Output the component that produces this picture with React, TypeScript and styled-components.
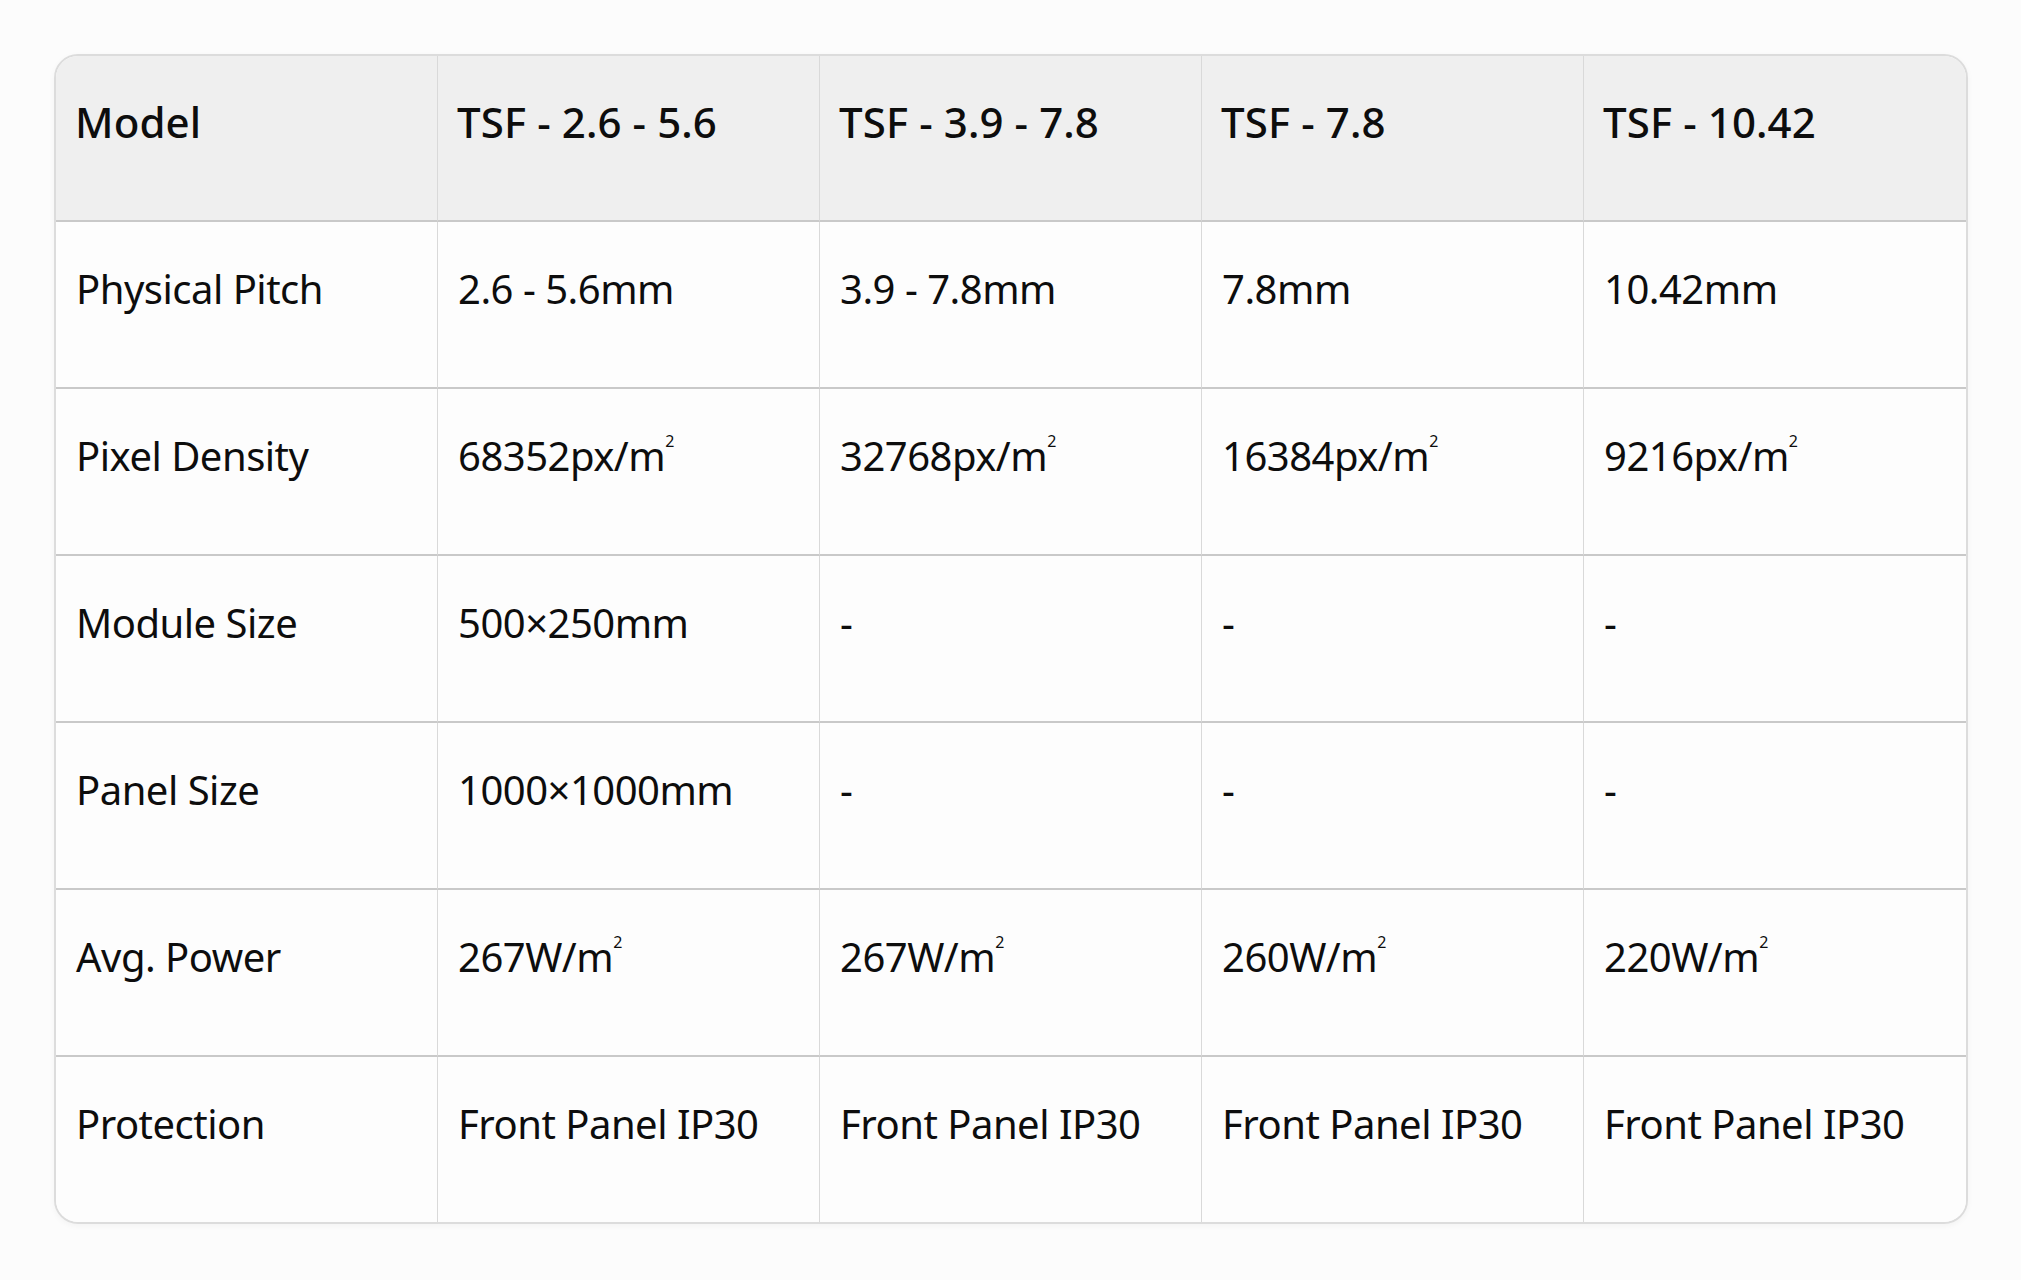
import React from "react";
import styled, { createGlobalStyle } from "styled-components";

const Global = createGlobalStyle`
  html, body { margin: 0; padding: 0; background: #fcfcfc; }
  body { font-family: "Noto Sans", "Open Sans", sans-serif; color: #0d0d0d; }
`;

const Page = styled.div`
  width: 2021px;
  height: 1280px;
  box-sizing: border-box;
  padding: 54px 53px 0 54px;
  background: #fcfcfc;
`;

const Table = styled.div`
  display: grid;
  grid-template-columns: repeat(5, 1fr);
  border: 2px solid #dcdcdc;
  border-radius: 24px;
  overflow: hidden;
  background: #fdfdfd;
  box-shadow: 0 2px 6px rgba(0, 0, 0, 0.04);
`;

const Cell = styled.div<{ $head?: boolean; $last?: boolean; $lastRow?: boolean }>`
  height: ${(p) => (p.$head ? 166 : p.$lastRow ? 165 : 167)}px;
  box-sizing: border-box;
  padding: ${(p) => (p.$head ? 42 : 43)}px 20px 0 ${(p) => (p.$head ? 19 : 20)}px;
  font-size: ${(p) => (p.$head ? 42 : 40)}px;
  line-height: 48px;
  letter-spacing: ${(p) => (p.$head ? "0.1px" : "-0.5px")};
  font-weight: ${(p) => (p.$head ? 500 : 400)};
  background: ${(p) => (p.$head ? "#efefef" : "#fdfdfd")};
  border-right: ${(p) => (p.$last ? "none" : "1px solid #d9d9d9")};
  border-bottom: ${(p) => (p.$lastRow ? "none" : "2px solid #c9c9c9")};
  white-space: nowrap;
`;

const Sup = styled.sup`
  font-size: 0.4em;
  vertical-align: 1.5em;
  line-height: 0;
  margin-left: 0;
`;

const M2 = () => (
  <>
    m<Sup>2</Sup>
  </>
);

type Row = { label: string; values: React.ReactNode[] };

const header = ["Model", "TSF - 2.6 - 5.6", "TSF - 3.9 - 7.8", "TSF - 7.8", "TSF - 10.42"];

const rows: Row[] = [
  { label: "Physical Pitch", values: ["2.6 - 5.6mm", "3.9 - 7.8mm", "7.8mm", "10.42mm"] },
  {
    label: "Pixel Density",
    values: [
      <>68352px/<M2 /></>,
      <>32768px/<M2 /></>,
      <>16384px/<M2 /></>,
      <>9216px/<M2 /></>,
    ],
  },
  { label: "Module Size", values: ["500×250mm", "-", "-", "-"] },
  { label: "Panel Size", values: ["1000×1000mm", "-", "-", "-"] },
  {
    label: "Avg. Power",
    values: [
      <>267W/<M2 /></>,
      <>267W/<M2 /></>,
      <>260W/<M2 /></>,
      <>220W/<M2 /></>,
    ],
  },
  { label: "Protection", values: ["Front Panel IP30", "Front Panel IP30", "Front Panel IP30", "Front Panel IP30"] },
];

export default function App() {
  return (
    <>
      <Global />
      <Page>
        <Table>
          {header.map((h, i) => (
            <Cell key={h} $head $last={i === 4}>
              {h}
            </Cell>
          ))}
          {rows.map((r, ri) => {
            const lastRow = ri === rows.length - 1;
            return (
              <React.Fragment key={r.label}>
                <Cell $lastRow={lastRow}>{r.label}</Cell>
                {r.values.map((v, vi) => (
                  <Cell key={vi} $last={vi === 3} $lastRow={lastRow}>
                    {v}
                  </Cell>
                ))}
              </React.Fragment>
            );
          })}
        </Table>
      </Page>
    </>
  );
}
